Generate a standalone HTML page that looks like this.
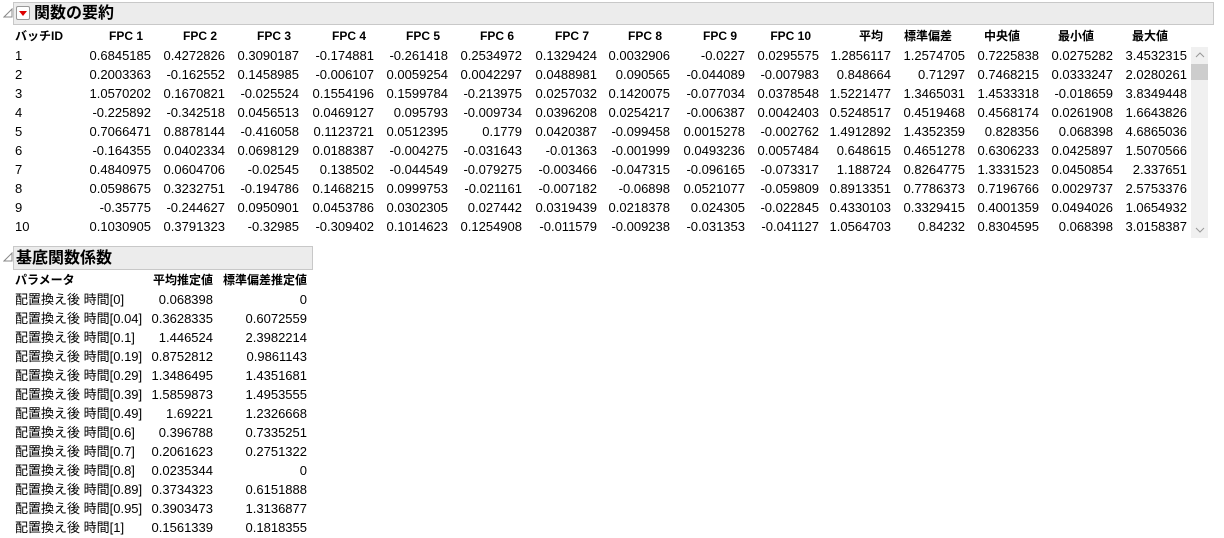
<!DOCTYPE html>
<html><head><meta charset="utf-8"><style>
body{margin:0;width:1224px;height:538px;background:#fff;position:relative;overflow:hidden;font-family:"Liberation Sans","Noto Sans CJK JP",sans-serif;font-size:13px;color:#000}
.hd{position:absolute;background:#ececec;border:1px solid #c8c8c8;box-sizing:border-box;font-weight:bold;font-size:16px;line-height:21px}
table{position:absolute;border-collapse:collapse;table-layout:fixed}
td{height:19px;padding:0;text-align:right;white-space:nowrap;line-height:19px}
td:first-child{text-align:left;padding-left:15px}
.h td{font-weight:bold;font-size:12px;text-align:center}
.h td:first-child{text-align:left}
</style></head><body>
<svg style="position:absolute;left:3px;top:8px" width="10" height="10"><path d="M1 9 L9 9 L9 1 Z" fill="none" stroke="#888"/></svg>
<div class="hd" style="left:13px;top:2px;width:1201px;height:23px">
<span style="position:absolute;left:2px;top:3px;width:14px;height:14px;border:1px solid #999;background:#fff;border-radius:2px;box-sizing:border-box"><span style="position:absolute;left:2px;top:4px;border-left:4px solid transparent;border-right:4px solid transparent;border-top:5px solid #d00"></span></span>
<span style="position:absolute;left:20px;top:0">関数の要約</span></div>
<table style="left:0;top:27px;width:1187px">
<colgroup><col style="width:77px"><col style="width:74px"><col style="width:74px"><col style="width:74px"><col style="width:75px"><col style="width:74px"><col style="width:74px"><col style="width:75px"><col style="width:73px"><col style="width:75px"><col style="width:74px"><col style="width:72px"><col style="width:74px"><col style="width:74px"><col style="width:74px"><col style="width:74px"></colgroup>
<tr class="h"><td>バッチID</td><td style="text-align:right;padding-right:8px">FPC 1</td><td style="text-align:right;padding-right:8px">FPC 2</td><td style="text-align:right;padding-right:8px">FPC 3</td><td style="text-align:right;padding-right:8px">FPC 4</td><td style="text-align:right;padding-right:8px">FPC 5</td><td style="text-align:right;padding-right:8px">FPC 6</td><td style="text-align:right;padding-right:8px">FPC 7</td><td style="text-align:right;padding-right:8px">FPC 8</td><td style="text-align:right;padding-right:8px">FPC 9</td><td style="text-align:right;padding-right:8px">FPC 10</td><td style="text-align:right;padding-right:8px">平均</td><td>標準偏差</td><td>中央値</td><td>最小値</td><td>最大値</td></tr>
<tr><td>1</td><td>0.6845185</td><td>0.4272826</td><td>0.3090187</td><td>-0.174881</td><td>-0.261418</td><td>0.2534972</td><td>0.1329424</td><td>0.0032906</td><td>-0.0227</td><td>0.0295575</td><td>1.2856117</td><td>1.2574705</td><td>0.7225838</td><td>0.0275282</td><td>3.4532315</td></tr>
<tr><td>2</td><td>0.2003363</td><td>-0.162552</td><td>0.1458985</td><td>-0.006107</td><td>0.0059254</td><td>0.0042297</td><td>0.0488981</td><td>0.090565</td><td>-0.044089</td><td>-0.007983</td><td>0.848664</td><td>0.71297</td><td>0.7468215</td><td>0.0333247</td><td>2.0280261</td></tr>
<tr><td>3</td><td>1.0570202</td><td>0.1670821</td><td>-0.025524</td><td>0.1554196</td><td>0.1599784</td><td>-0.213975</td><td>0.0257032</td><td>0.1420075</td><td>-0.077034</td><td>0.0378548</td><td>1.5221477</td><td>1.3465031</td><td>1.4533318</td><td>-0.018659</td><td>3.8349448</td></tr>
<tr><td>4</td><td>-0.225892</td><td>-0.342518</td><td>0.0456513</td><td>0.0469127</td><td>0.095793</td><td>-0.009734</td><td>0.0396208</td><td>0.0254217</td><td>-0.006387</td><td>0.0042403</td><td>0.5248517</td><td>0.4519468</td><td>0.4568174</td><td>0.0261908</td><td>1.6643826</td></tr>
<tr><td>5</td><td>0.7066471</td><td>0.8878144</td><td>-0.416058</td><td>0.1123721</td><td>0.0512395</td><td>0.1779</td><td>0.0420387</td><td>-0.099458</td><td>0.0015278</td><td>-0.002762</td><td>1.4912892</td><td>1.4352359</td><td>0.828356</td><td>0.068398</td><td>4.6865036</td></tr>
<tr><td>6</td><td>-0.164355</td><td>0.0402334</td><td>0.0698129</td><td>0.0188387</td><td>-0.004275</td><td>-0.031643</td><td>-0.01363</td><td>-0.001999</td><td>0.0493236</td><td>0.0057484</td><td>0.648615</td><td>0.4651278</td><td>0.6306233</td><td>0.0425897</td><td>1.5070566</td></tr>
<tr><td>7</td><td>0.4840975</td><td>0.0604706</td><td>-0.02545</td><td>0.138502</td><td>-0.044549</td><td>-0.079275</td><td>-0.003466</td><td>-0.047315</td><td>-0.096165</td><td>-0.073317</td><td>1.188724</td><td>0.8264775</td><td>1.3331523</td><td>0.0450854</td><td>2.337651</td></tr>
<tr><td>8</td><td>0.0598675</td><td>0.3232751</td><td>-0.194786</td><td>0.1468215</td><td>0.0999753</td><td>-0.021161</td><td>-0.007182</td><td>-0.06898</td><td>0.0521077</td><td>-0.059809</td><td>0.8913351</td><td>0.7786373</td><td>0.7196766</td><td>0.0029737</td><td>2.5753376</td></tr>
<tr><td>9</td><td>-0.35775</td><td>-0.244627</td><td>0.0950901</td><td>0.0453786</td><td>0.0302305</td><td>0.027442</td><td>0.0319439</td><td>0.0218378</td><td>0.024305</td><td>-0.022845</td><td>0.4330103</td><td>0.3329415</td><td>0.4001359</td><td>0.0494026</td><td>1.0654932</td></tr>
<tr><td>10</td><td>0.1030905</td><td>0.3791323</td><td>-0.32985</td><td>-0.309402</td><td>0.1014623</td><td>0.1254908</td><td>-0.011579</td><td>-0.009238</td><td>-0.031353</td><td>-0.041127</td><td>1.0564703</td><td>0.84232</td><td>0.8304595</td><td>0.068398</td><td>3.0158387</td></tr>
</table>
<div style="position:absolute;left:1191px;top:47px;width:17px;height:191px;background:#f0f0f0"></div>
<div style="position:absolute;left:1191px;top:64px;width:17px;height:16px;background:#cdcdcd"></div>
<svg style="position:absolute;left:1195px;top:51px" width="10" height="8"><path d="M1 6 L5 2 L9 6" fill="none" stroke="#999"/></svg>
<svg style="position:absolute;left:1195px;top:226px" width="10" height="8"><path d="M1 2 L5 6 L9 2" fill="none" stroke="#999"/></svg>
<svg style="position:absolute;left:3px;top:252px" width="10" height="10"><path d="M1 9 L9 9 L9 1 Z" fill="none" stroke="#888"/></svg>
<div class="hd" style="left:13px;top:246px;width:300px;height:24px"><span style="position:absolute;left:2px;top:1px">基底関数係数</span></div>
<table style="left:0;top:271px;width:307px">
<colgroup><col style="width:135px"><col style="width:78px"><col style="width:94px"></colgroup>
<tr class="h"><td>パラメータ</td><td style="text-align:right">平均推定値</td><td style="text-align:right">標準偏差推定値</td></tr>
<tr><td>配置換え後 時間[0]</td><td>0.068398</td><td>0</td></tr>
<tr><td>配置換え後 時間[0.04]</td><td>0.3628335</td><td>0.6072559</td></tr>
<tr><td>配置換え後 時間[0.1]</td><td>1.446524</td><td>2.3982214</td></tr>
<tr><td>配置換え後 時間[0.19]</td><td>0.8752812</td><td>0.9861143</td></tr>
<tr><td>配置換え後 時間[0.29]</td><td>1.3486495</td><td>1.4351681</td></tr>
<tr><td>配置換え後 時間[0.39]</td><td>1.5859873</td><td>1.4953555</td></tr>
<tr><td>配置換え後 時間[0.49]</td><td>1.69221</td><td>1.2326668</td></tr>
<tr><td>配置換え後 時間[0.6]</td><td>0.396788</td><td>0.7335251</td></tr>
<tr><td>配置換え後 時間[0.7]</td><td>0.2061623</td><td>0.2751322</td></tr>
<tr><td>配置換え後 時間[0.8]</td><td>0.0235344</td><td>0</td></tr>
<tr><td>配置換え後 時間[0.89]</td><td>0.3734323</td><td>0.6151888</td></tr>
<tr><td>配置換え後 時間[0.95]</td><td>0.3903473</td><td>1.3136877</td></tr>
<tr><td>配置換え後 時間[1]</td><td>0.1561339</td><td>0.1818355</td></tr>
</table>
</body></html>
